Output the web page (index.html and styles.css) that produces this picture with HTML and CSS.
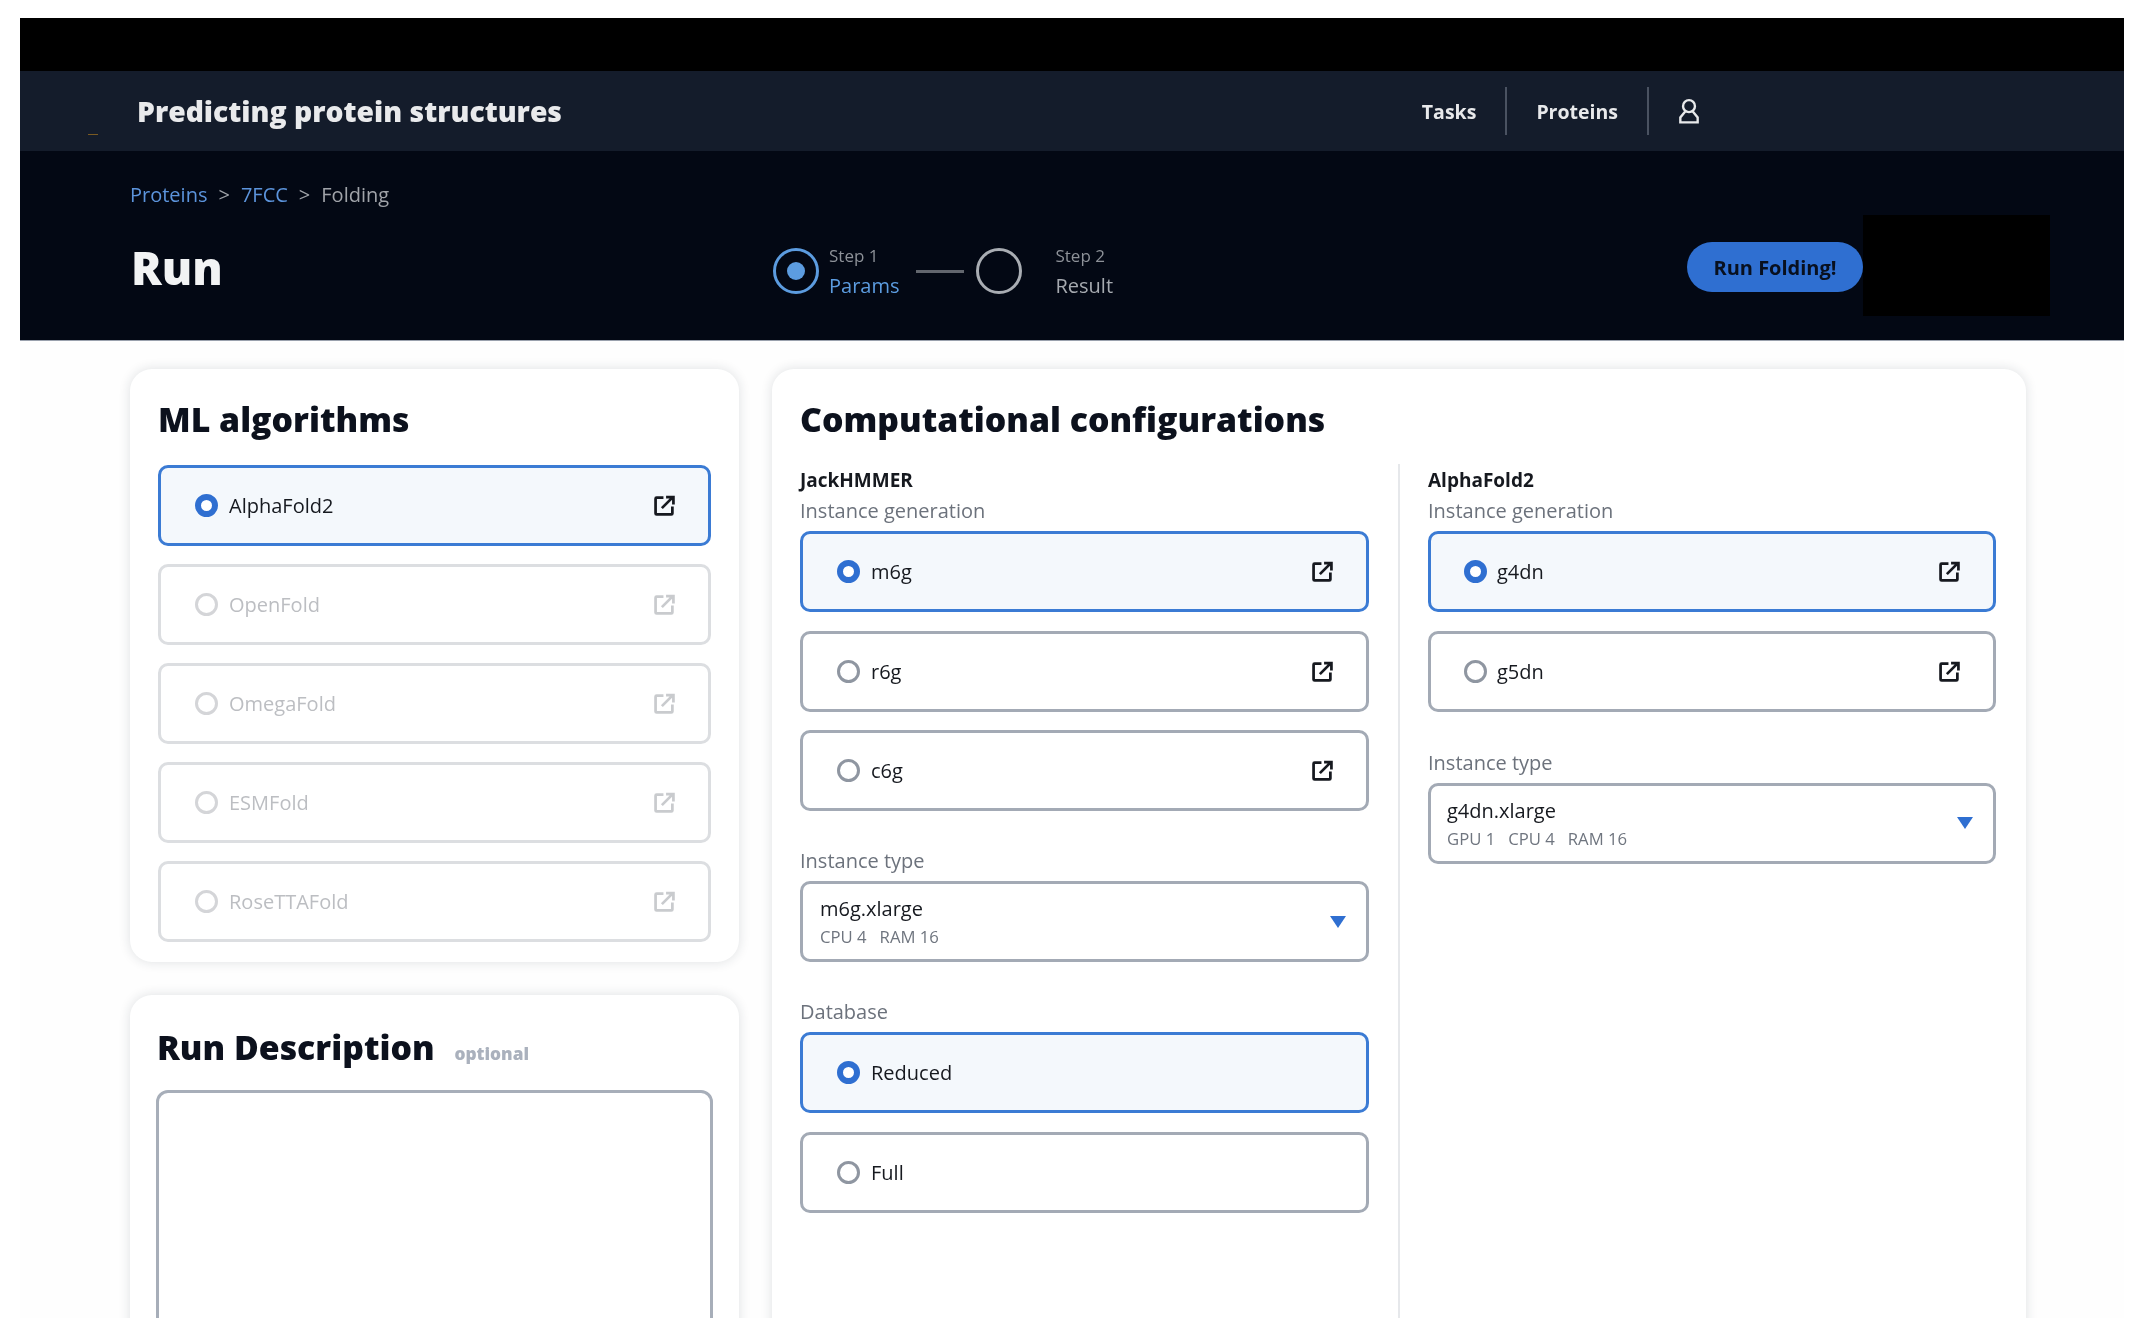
FILE: index.html
```html
<!DOCTYPE html>
<html lang="en">
<head>
<meta charset="utf-8">
<title>Predicting protein structures</title>
<link rel="stylesheet" href="styles.css">
</head>
<body>
<svg class="sprite" aria-hidden="true">
  <symbol id="ext" viewBox="0 0 20 20">
    <path d="M9 2.500H2.500a1 1 0 0 0-1 1v14a1 1 0 0 0 1 1h14a1 1 0 0 0 1-1V11" fill="none" stroke="currentColor" stroke-width="2.600"/>
    <path d="M7.500 12.500 17 3M11.500 2h7v7" fill="none" stroke="currentColor" stroke-width="2.600"/>
  </symbol>
</svg>
<div class="frame">
  <div class="topband"></div>
  <nav class="nav">
    <span class="speck"></span>
    <div class="brand">Predicting protein structures</div>
    <div class="navlinks">
      <a class="navlink">Tasks</a>
      <span class="navdiv"></span>
      <a class="navlink">Proteins</a>
      <span class="navdiv"></span>
      <svg class="user" viewBox="0 0 20 24"><circle cx="10" cy="7.500" r="5.500" fill="none" stroke="currentColor" stroke-width="2.200"/><path d="M6.500 12.500 2 18v4.500h16V18l-4.500-5.500" fill="none" stroke="currentColor" stroke-width="2.200"/></svg>
    </div>
  </nav>
  <header class="hero">
    <div class="crumbs"><a class="crumb-link">Proteins</a><span class="sep">&gt;</span><a class="crumb-link">7FCC</a><span class="sep">&gt;</span><span>Folding</span></div>
    <div class="hero-row">
      <h1 class="page-title">Run</h1>
      <div class="stepper">
        <span class="step-dot active"><i></i></span>
        <div class="step-text active"><small>Step 1</small><b>Params</b></div>
        <span class="step-line"></span>
        <span class="step-dot"></span>
        <div class="step-text"><small>Step 2</small><b>Result</b></div>
      </div>
      <button class="run-btn">Run Folding!</button>
      <div class="redact"></div>
    </div>
  </header>
  <main class="main">
    <div class="left">
      <section class="card algos">
        <h2 class="card-title">ML algorithms</h2>
        <div class="stack">
          <div class="opt on"><span class="radio"></span><span class="opt-label">AlphaFold2</span><svg class="ext"><use href="#ext"/></svg></div>
          <div class="opt off"><span class="radio"></span><span class="opt-label">OpenFold</span><svg class="ext"><use href="#ext"/></svg></div>
          <div class="opt off"><span class="radio"></span><span class="opt-label">OmegaFold</span><svg class="ext"><use href="#ext"/></svg></div>
          <div class="opt off"><span class="radio"></span><span class="opt-label">ESMFold</span><svg class="ext"><use href="#ext"/></svg></div>
          <div class="opt off"><span class="radio"></span><span class="opt-label">RoseTTAFold</span><svg class="ext"><use href="#ext"/></svg></div>
        </div>
      </section>
      <section class="card desc">
        <h2 class="card-title">Run Description <small class="optional">optional</small></h2>
        <textarea class="area" aria-label="Run Description"></textarea>
      </section>
    </div>
    <section class="card config">
      <h2 class="card-title">Computational configurations</h2>
      <div class="cols">
        <div class="col">
          <h3 class="col-title">JackHMMER</h3>
          <div class="field">
            <label class="lbl">Instance generation</label>
            <div class="stack">
              <div class="opt on"><span class="radio"></span><span class="opt-label">m6g</span><svg class="ext"><use href="#ext"/></svg></div>
              <div class="opt"><span class="radio"></span><span class="opt-label">r6g</span><svg class="ext"><use href="#ext"/></svg></div>
              <div class="opt"><span class="radio"></span><span class="opt-label">c6g</span><svg class="ext"><use href="#ext"/></svg></div>
            </div>
          </div>
          <div class="field">
            <label class="lbl">Instance type</label>
            <div class="select"><div><div class="sel-main">m6g.xlarge</div><div class="sel-sub"><span>CPU 4</span><span>RAM 16</span></div></div><span class="caret"></span></div>
          </div>
          <div class="field">
            <label class="lbl">Database</label>
            <div class="stack">
              <div class="opt on"><span class="radio"></span><span class="opt-label">Reduced</span></div>
              <div class="opt"><span class="radio"></span><span class="opt-label">Full</span></div>
            </div>
          </div>
        </div>
        <div class="col second">
          <h3 class="col-title">AlphaFold2</h3>
          <div class="field">
            <label class="lbl">Instance generation</label>
            <div class="stack">
              <div class="opt on"><span class="radio"></span><span class="opt-label">g4dn</span><svg class="ext"><use href="#ext"/></svg></div>
              <div class="opt"><span class="radio"></span><span class="opt-label">g5dn</span><svg class="ext"><use href="#ext"/></svg></div>
            </div>
          </div>
          <div class="field">
            <label class="lbl">Instance type</label>
            <div class="select"><div><div class="sel-main">g4dn.xlarge</div><div class="sel-sub"><span>GPU 1</span><span>CPU 4</span><span>RAM 16</span></div></div><span class="caret"></span></div>
          </div>
        </div>
      </div>
    </section>
  </main>
</div>
</body>
</html>
```
FILE: styles.css
```css
* { box-sizing: border-box; }
html, body { height: 100%; }
body {
  margin: 0;
  padding: 18px 18px 18px 20px;
  background: #fff;
  font-family: "Open Sans", "Noto Sans", sans-serif;
  color: #16191f;
  overflow: hidden;
}
.sprite { display: none; }
.frame {
  height: 1300px;
  overflow: hidden;
  background: #fefefe;
  filter: blur(0.6px);
}
.topband { height: 53px; background: #000; }

.nav {
  position: relative;
  height: 80px;
  background: #141c2b;
  display: flex;
  align-items: center;
  justify-content: space-between;
  padding: 0 424px 0 117px;
  color: #f1f2f3;
}
.speck { position: absolute; left: 68px; top: 63px; width: 10px; height: 1px; background: #7a5a22; }
.brand { font-size: 28.300px; font-weight: 800; letter-spacing: 0; color: #e9eaec; }
.navlinks { display: flex; align-items: center; }
.navlink { font-size: 19.500px; font-weight: 700; color: #e8e9eb; }
.navdiv { width: 2px; height: 48px; background: #4a5261; margin: 0 29px; }
.user { width: 22px; height: 26px; color: #e8e9eb; }

.hero {
  background: #030814;
  padding: 28px 74px 24px 110px;
  height: 190px;
  border-bottom: 1px solid #9aa1ad;
}
.crumbs { display: flex; align-items: center; height: 30px; margin-bottom: 6px; font-size: 20px; color: #a0a3a9; }
.crumb-link { color: #5c94dc; }
.sep { margin: 0 11px; color: #a0a3a9; }
.hero-row { display: flex; align-items: center; height: 101px; }
.page-title { width: 643px; margin: 2px 0 0; font-size: 45.500px; font-weight: 800; line-height: 60px; color: #f2f3f4; padding-left: 1px; }
.stepper { flex: 1; display: flex; align-items: center; padding-top: 11px; }
.step-dot { width: 46px; height: 46px; border: 3px solid #a9adb3; border-radius: 50%; display: flex; align-items: center; justify-content: center; flex: none; }
.step-dot.active { border-color: #5c9ce0; }
.step-dot i { width: 18px; height: 18px; border-radius: 50%; background: #5c9ce0; }
.step-text { display: flex; flex-direction: column; margin-left: 10px; }
.step-text:last-child { margin-left: 33px; }
.step-text small { font-size: 17px; line-height: 30px; color: #8d9198; }
.step-text b { font-size: 20px; line-height: 30px; font-weight: 400; color: #a6aab0; }
.step-text.active b { color: #5c9ce0; }
.step-line { width: 48px; height: 3px; background: #62666e; margin: 0 12px 0 17px; }
.run-btn {
  width: 176px;
  height: 50px;
  margin-top: 3px;
  border: 0;
  border-radius: 25px;
  background: #2f6fd1;
  color: #08101f;
  font: 700 20px "Open Sans", sans-serif;
  padding: 0;
}
.redact { width: 187px; height: 101px; background: #000; }

.main { display: flex; align-items: stretch; gap: 33px; padding: 28px 98px 0 110px; }
.left { width: 609px; display: flex; flex-direction: column; gap: 33px; flex: none; }
.card {
  background: #fff;
  border-radius: 22px;
  box-shadow: 0 0 12px rgba(30, 40, 60, 0.14);
  padding: 30px 28px 20px;
}
.card-title { margin: 0; font-size: 33.800px; line-height: 40px; font-weight: 800; color: #0c111d; }
.algos { padding: 30px 28px 20px; }
.algos > .card-title { margin-bottom: 26px; }
.stack { display: flex; flex-direction: column; gap: 18px; }
.opt {
  height: 81px;
  display: flex;
  align-items: center;
  padding: 0 33px 0 34px;
  background: #fff;
  border: 3px solid #a3aab5;
  border-radius: 10px;
}
.opt.on { background: #f4f8fc; border-color: #3b7bd4; }
.radio { width: 23px; height: 23px; border-radius: 50%; border: 3px solid #8f96a1; background: #fff; flex: none; }
.opt.on .radio { border: 6px solid #2f6fd1; }
.opt-label { margin-left: 11px; font-size: 20px; color: #16191f; flex: 1; }
.ext { width: 21px; height: 21px; color: #16191f; flex: none; }
.opt.off { border-color: #dcdee1; }
.opt.off .radio { border-color: #d4d5d8; }
.opt.off .opt-label { color: #bcbec2; }
.opt.off .ext { color: #c9cbce; }

.desc { padding: 32px 27px 0 27px; }
.desc > .card-title { margin-bottom: 16px; }
.optional { margin-left: 11px; font-size: 17.300px; font-weight: 800; color: #aab1bd; }
.area { display: block; width: calc(100% + 2px); margin-left: -1px; height: 400px; border: 3px solid #a7aeb9; border-radius: 12px; background: #fff; resize: none; }

.config { flex: 1; padding: 30px 30px 0 28px; display: flex; flex-direction: column; }
.cols { margin-top: 25px; flex: 1; display: grid; grid-template-columns: 1fr 1fr; column-gap: 0; }
.col { padding: 3px 29px 0 0; }
.col .stack { gap: 18.500px; }
.col.second { border-left: 2px solid #e6e8eb; padding: 3px 0 0 28px; }
.col.second .opt { padding-left: 33px; }
.col.second .opt-label { margin-left: 10px; }
.col.second .field { margin-bottom: 37px; }
.col.second .select { padding-left: 16px; }
.col-title { margin: 0 0 4px; font-size: 19px; line-height: 26px; font-weight: 700; color: #16191f; }
.field { margin-bottom: 36px; }
.lbl { display: block; font-size: 20px; line-height: 28px; margin-bottom: 6px; color: #6c727c; }
.select {
  height: 81px;
  display: flex;
  align-items: center;
  justify-content: space-between;
  padding: 0 20px 0 17px;
  border: 3px solid #a3aab5;
  border-radius: 10px;
  background: #fff;
}
.sel-main { font-size: 20px; line-height: 30px; color: #16191f; }
.sel-sub { display: flex; gap: 13px; font-size: 16.700px; line-height: 25px; color: #6f757f; }
.caret { width: 0; height: 0; border-left: 8px solid transparent; border-right: 8px solid transparent; border-top: 12px solid #2f6fd1; }
```
